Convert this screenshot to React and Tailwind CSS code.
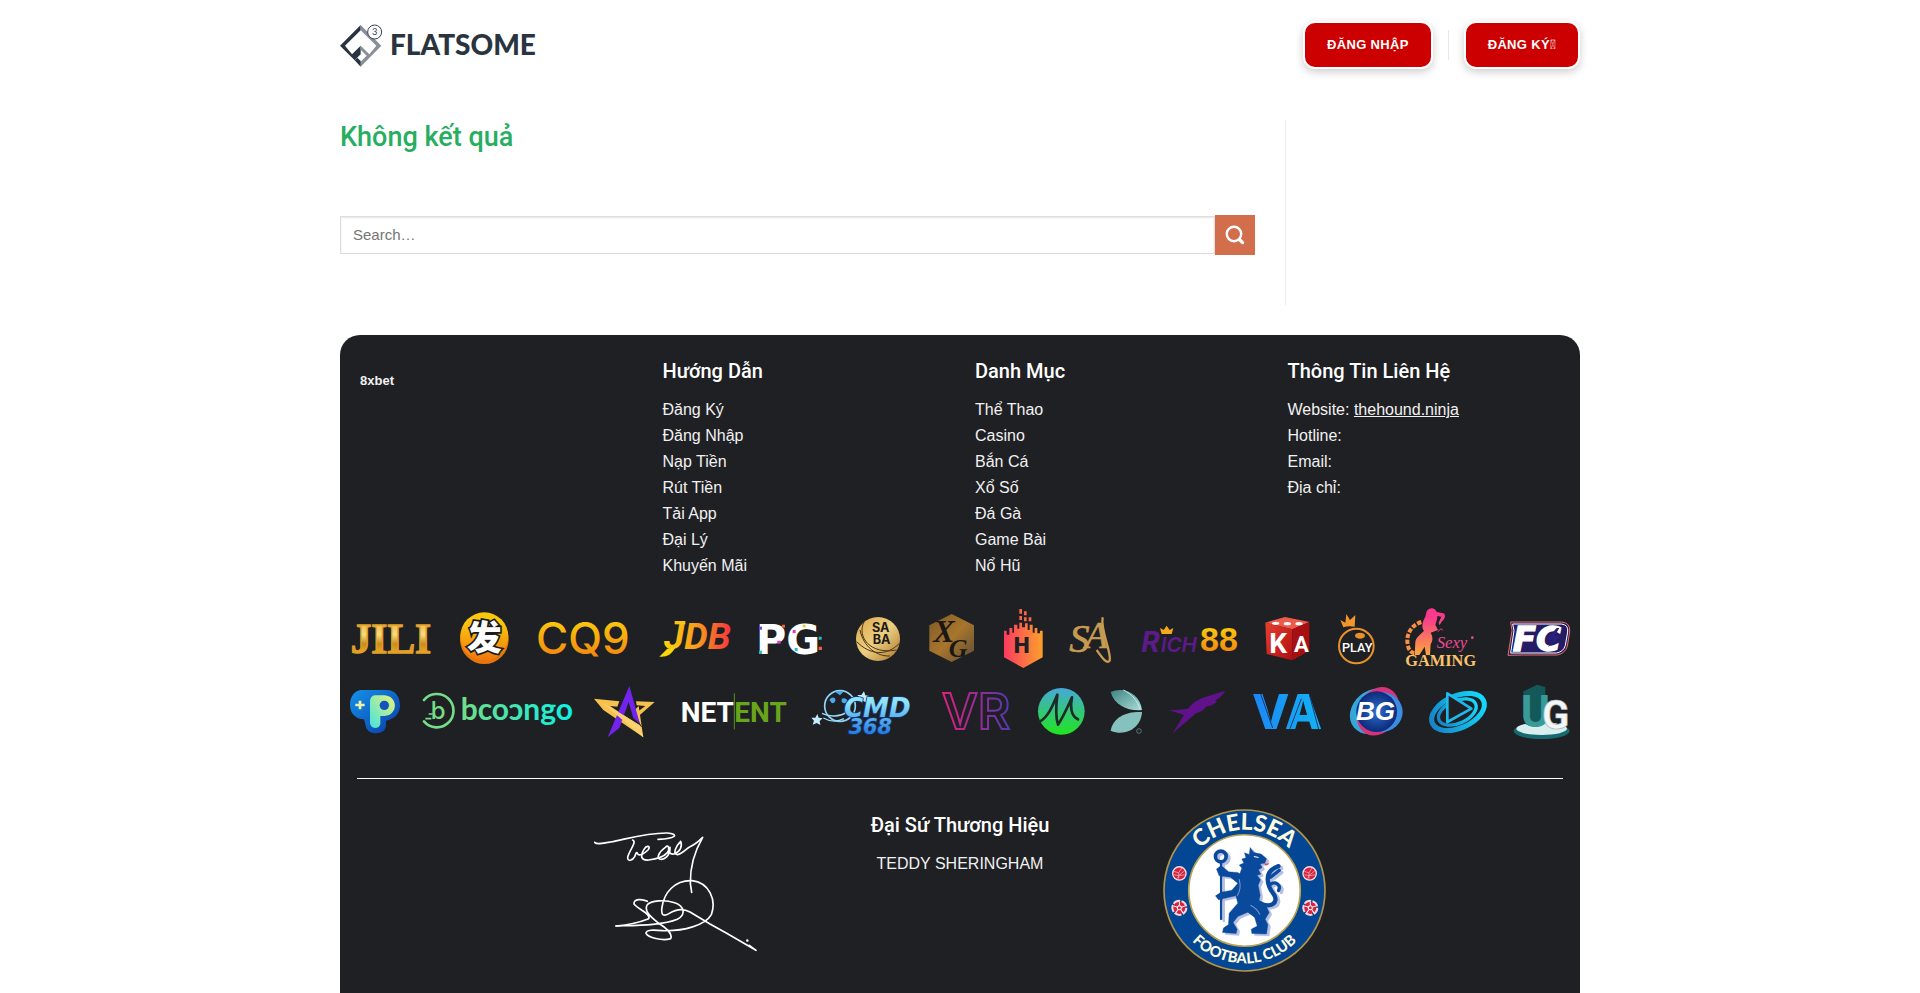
const guideLinks = ['Đăng Ký', 'Đăng Nhập', 'Nạp Tiền', 'Rút Tiền', 'Tải App', 'Đại Lý', 'Khuyến Mãi']
const categoryLinks = ['Thể Thao', 'Casino', 'Bắn Cá', 'Xổ Số', 'Đá Gà', 'Game Bài', 'Nổ Hũ']

const headerButton =
  'h-12 rounded-xl border-2 border-white bg-[#cc0000] px-[22px] text-[13px] font-bold uppercase tracking-wide text-white shadow-[0_3px_8px_rgba(0,0,0,0.2)]'

function Logo() {
  return (
    <svg viewBox="30 30 600 144" className="h-12 w-[200px]" role="img" aria-label="Flatsome">
      <path d="M92 42 L30 104 L74 148 L92 130 V104 L66 130 L45 104 L92 58 Z" fill="#2a3441" />
      <path d="M92 42 L154 104 L92 167 V152 L110 134 L92 116 V104 L118 130 L139 104 L92 58 Z" fill="#8b8f98" />
      <path d="M74 148 L92 167 V150 L82 140 Z" fill="#2a3441" />
      <circle cx="134" cy="63" r="21" fill="#fff" stroke="#374151" strokeWidth="3" />
      <text x="126" y="73" fontFamily="Lato" fontSize="28" fill="#374151">3</text>
      <text x="180" y="131" fontFamily="Lato" fontWeight="900" fontSize="84" fill="#2a3441">FLATSOME</text>
    </svg>
  )
}

function ProviderGradients() {
  return (
    <defs>
      <linearGradient id="gold" x1="0" y1="0" x2="0" y2="1">
        <stop offset="0" stopColor="#e8a520" />
        <stop offset="0.4" stopColor="#f6dc80" />
        <stop offset="0.6" stopColor="#c98a1e" />
        <stop offset="0.85" stopColor="#f5b022" />
      </linearGradient>
      <linearGradient id="amber" x1="0" y1="0" x2="0" y2="1">
        <stop offset="0.2" stopColor="#fbc70d" />
        <stop offset="1" stopColor="#f0780f" />
      </linearGradient>
      <linearGradient id="jdb" x1="0" y1="0" x2="1" y2="0">
        <stop offset="0" stopColor="#fbd50b" />
        <stop offset="0.5" stopColor="#f79a1c" />
        <stop offset="1" stopColor="#f8353d" />
      </linearGradient>
      <linearGradient id="bronze" x1="0" y1="0" x2="1" y2="1">
        <stop offset="0" stopColor="#d9a548" />
        <stop offset="0.5" stopColor="#edcf82" />
        <stop offset="1" stopColor="#a87427" />
      </linearGradient>
      <linearGradient id="brown" x1="0" y1="0" x2="1" y2="1">
        <stop offset="0" stopColor="#7c5a28" />
        <stop offset="0.5" stopColor="#a8762c" />
        <stop offset="1" stopColor="#5c4c38" />
      </linearGradient>
      <linearGradient id="hot" x1="0" y1="0" x2="1" y2="0">
        <stop offset="0" stopColor="#fb3a60" />
        <stop offset="1" stopColor="#fca02c" />
      </linearGradient>
      <linearGradient id="lady" x1="0" y1="0" x2="0" y2="1">
        <stop offset="0.2" stopColor="#f93a8c" />
        <stop offset="1" stopColor="#fba63c" />
      </linearGradient>
      <linearGradient id="mint" x1="0" y1="0" x2="1" y2="0">
        <stop offset="0" stopColor="#75dc88" />
        <stop offset="1" stopColor="#0df0e4" />
      </linearGradient>
      <linearGradient id="pad" x1="0" y1="0" x2="1" y2="1">
        <stop offset="0" stopColor="#1592e8" />
        <stop offset="1" stopColor="#0a3ba8" />
      </linearGradient>
      <linearGradient id="lime" x1="0" y1="1" x2="1" y2="0">
        <stop offset="0" stopColor="#43e3dc" />
        <stop offset="1" stopColor="#ecf27a" />
      </linearGradient>
      <linearGradient id="sky" x1="0" y1="0" x2="0" y2="1">
        <stop offset="0.2" stopColor="#8fe4fb" />
        <stop offset="1" stopColor="#1569df" />
      </linearGradient>
      <linearGradient id="neon" x1="0" y1="0" x2="1" y2="0">
        <stop offset="0" stopColor="#e01f7e" />
        <stop offset="1" stopColor="#5438b0" />
      </linearGradient>
      <linearGradient id="micro" x1="0" y1="0" x2="0" y2="1">
        <stop offset="0" stopColor="#47a8d8" />
        <stop offset="1" stopColor="#20e51e" />
      </linearGradient>
      <linearGradient id="leaf" x1="0" y1="0" x2="1" y2="1">
        <stop offset="0" stopColor="#3f8583" />
        <stop offset="1" stopColor="#a9dcd6" />
      </linearGradient>
      <linearGradient id="azure" x1="0" y1="0" x2="1" y2="0">
        <stop offset="0" stopColor="#1c86f5" />
        <stop offset="1" stopColor="#12b4f4" />
      </linearGradient>
      <linearGradient id="cyan" x1="0" y1="0" x2="1" y2="0">
        <stop offset="0" stopColor="#1686c8" />
        <stop offset="1" stopColor="#14d8fb" />
      </linearGradient>
      <linearGradient id="dice" x1="0" y1="0" x2="1" y2="1">
        <stop offset="0" stopColor="#e6402f" />
        <stop offset="1" stopColor="#b00d12" />
      </linearGradient>
      <radialGradient id="globe">
        <stop offset="0" stopColor="#2b6fd0" />
        <stop offset="1" stopColor="#0d2a78" />
      </radialGradient>
    </defs>
  )
}

function TopLogos() {
  return (
    <g>
      {/* JILI */}
      <text x="32" y="160" fontFamily="Liberation Serif" fontWeight="700" fontSize="124" fill="url(#gold)" stroke="#e0a02a" strokeWidth="4">JILI</text>

      {/* Fa Chai */}
      <circle cx="433" cy="119" r="73" fill="#e8760c" />
      <circle cx="433" cy="109" r="72" fill="url(#amber)" />
      <text x="381" y="151" fontFamily="Noto Sans CJK SC" fontWeight="900" fontSize="104" fill="#fff" stroke="#1b1b1b" strokeWidth="10" paintOrder="stroke">发</text>

      {/* CQ9 */}
      <text x="588" y="161" fontFamily="Inter" fontWeight="500" fontSize="132" fill="url(#amber)">CQ9</text>

      {/* JDB */}
      <text x="972" y="148" fontFamily="Roboto" fontWeight="700" fontStyle="italic" fontSize="112" fill="url(#jdb)">JDB</text>
      <path d="M1004 68 H1036" stroke="#fbc412" strokeWidth="10" />
      <path d="M958 170 C978 172 994 166 1006 142 L982 146 Z" fill="#fbd50b" />

      {/* PG */}
      <g transform="translate(1200 0)">
        <text x="48" y="162" fontFamily="DejaVu Sans" fontWeight="700" fontSize="124" fill="#fff">PG</text>
        <path d="M126 74h9v9h-9z M236 140h10v10h-10z" fill="#f0603c" />
        <path d="M112 122h10v9h-10z M158 90h9v9h-9z" fill="#d838c8" />
        <path d="M57 152h9v10h-9z M236 110h9v9h-9z M164 144h9v9h-9z" fill="#28b8c8" />
        <path d="M57 80h9v9h-9z" fill="#7840d8" />
        <path d="M188 74h9v8h-9z" fill="#e8c83c" />

        {/* SABA */}
        <circle cx="414" cy="117" r="66" fill="url(#bronze)" />
        <path d="M372 66 C350 110 390 165 470 150 M350 125 C390 165 440 170 478 130 M360 90 C370 140 410 170 450 168" fill="none" stroke="#4a3413" strokeWidth="3" />
        <text fontFamily="Inter" fontWeight="700" fontSize="38" fill="#1c1a17">
          <tspan x="396" y="96">SA</tspan>
          <tspan x="398" y="133">BA</tspan>
        </text>

        {/* XG */}
        <path d="M635 42 L702 76 V152 L635 186 L568 152 V76 Z" fill="url(#brown)" />
        <text fontFamily="Liberation Serif" fontWeight="700" fontStyle="italic" fill="#1b1712">
          <tspan x="580" y="126" fontSize="96">X</tspan>
          <tspan x="626" y="170" fontSize="78">G</tspan>
        </text>

        {/* Hacksaw */}
        <path d="M792 92 H800 V104 H808 V84 H817 V98 H822 V74 H832 V86 H838 V68 H846 V82 H855 V70 H863 V90 H869 V74 H878 V98 H884 V84 H892 V100 H900 V92 H908 V172 L850 204 L792 172 Z" fill="url(#hot)" />
        <path d="M838 27h8v14h-8z M852 34h8v12h-8z M838 48h8v12h-8z M852 52h8v12h-8z M866 52h8v12h-8z" fill="#fb6547" />
        <text x="819" y="158" fontFamily="DejaVu Sans" fontWeight="700" fontSize="62" fill="#1f2024">H</text>

        {/* SA */}
        <text fontFamily="Liberation Serif" fontStyle="italic" fill="#c79b52" stroke="#c79b52" strokeWidth="2">
          <tspan x="988" y="155" fontSize="122">S</tspan>
          <tspan x="1036" y="144" fontSize="112">A</tspan>
        </text>
        <path d="M1088 52 C1080 90 1116 160 1109 182 C1100 194 1084 170 1070 150" fill="none" stroke="#c79b52" strokeWidth="7" />
      </g>

      {/* Rich88 */}
      <g transform="translate(2460 0)">
        <text y="155" fontFamily="Inter" fontStyle="italic" fill="#5c1a8a">
          <tspan x="-56" fontWeight="700" fontSize="84">R</tspan>
          <tspan x="2" fontWeight="600" fontSize="62">ICH</tspan>
        </text>
        <path d="M5 102 L0 84 L11 90 L20 77 L29 90 L40 84 L35 102 Z" fill="#f5a81c" />
        <text x="120" y="154" fontFamily="Liberation Sans" fontWeight="700" fontSize="102" fill="url(#amber)">88</text>

        {/* KA */}
        <path d="M316 68 L375 51 L448 66 L397 88 Z" fill="#ee5a4c" />
        <path d="M316 68 L397 88 V181 L320 162 Z" fill="url(#dice)" />
        <path d="M397 88 L448 66 V152 L397 181 Z" fill="#a80f12" />
        <g fill="#fff">
          <ellipse cx="347" cy="70" rx="11" ry="5" />
          <ellipse cx="382" cy="71" rx="11" ry="5" />
          <ellipse cx="417" cy="71" rx="11" ry="5" />
        </g>
        <text fontFamily="Roboto" fontWeight="700" fill="#fff">
          <tspan x="328" y="158" fontSize="84">K</tspan>
          <tspan x="402" y="156" fontSize="66">A</tspan>
        </text>

        {/* Pragmatic Play */}
        <circle cx="589" cy="138" r="52" fill="none" stroke="#e8912a" strokeWidth="6" />
        <path d="M550 82 L541 60 L556 68 L559 42 L570 60 L586 45 L584 80 Q566 76 550 82 Z" fill="#f0962b" />
        <ellipse cx="600" cy="107" rx="15" ry="9" fill="#e8912a" />
        <path d="M545 126h88v33h-88z" fill="#1f2024" />
        <text x="546" y="157" fontFamily="Roboto" fontWeight="500" fontSize="38" fill="#fff">PLAY</text>

        {/* Sexy Gaming */}
        <path d="M800 34 C808 20 826 22 830 36 L850 40 C858 44 856 56 846 64 L838 76 L836 68 L844 50 L832 48 C832 60 828 66 826 74 L834 90 L812 98 C820 112 818 124 812 132 L810 165 H798 L794 140 L778 165 H764 L766 125 C770 108 786 100 792 92 C782 80 790 60 796 50 Z" fill="url(#lady)" />
        <path d="M784 66 C752 76 736 106 744 138 C746 150 756 160 766 160" fill="none" stroke="#f99043" strokeWidth="12" strokeDasharray="13 5" />
        <path d="M834 95 q10 -14 14 -4" fill="none" stroke="#e04592" strokeWidth="3" />
        <text fontFamily="Liberation Serif">
          <tspan x="830" y="143" fontStyle="italic" fontSize="50" fill="#ee4b93">Sexy</tspan>
          <tspan x="736" y="199" fontWeight="700" fontSize="49" fill="#f9c46c">GAMING</tspan>
        </text>
        <circle cx="937" cy="113" r="4" fill="#ee4b93" />

        {/* FC */}
        <path d="M1052 66 H1205 Q1232 68 1229 96 L1222 138 Q1216 160 1192 165 H1090 L1044 166 L1056 92 Z" fill="#241d66" stroke="#e8705a" strokeWidth="3" />
        <path d="M1058 72 H1204 Q1226 74 1223 96 L1216 136 Q1211 155 1190 159 H1052 L1062 92 Z" fill="none" stroke="#fff" strokeWidth="3" />
        <text x="1058" y="153" fontFamily="DejaVu Sans" fontWeight="700" fontStyle="italic" fontSize="102" fill="#fff" stroke="#fff" strokeWidth="4">FC</text>
        <path d="M1190 84 L1158 120 H1176 L1164 142 L1202 108 H1184 L1198 84 Z" fill="#2a1f7c" />
      </g>
    </g>
  )
}

function BottomLogos() {
  return (
    <g>
      {/* TP */}
      <path d="M62 270 H140 C166 270 180 290 180 316 C180 342 162 358 138 362 V378 Q136 400 106 400 Q78 398 76 372 L72 358 C44 356 30 338 30 314 C30 290 44 272 62 270 Z" fill="url(#pad)" />
      <path d="M56 302h8v9h10v8h-10v9h-8v-9h-10v-8h10z" fill="#e8f4a8" />
      <path d="M104 286 H134 C176 290 174 346 134 348 H121 V372 Q118 384 105 384 Q92 382 90 370 V302 Q92 288 104 286 Z" fill="url(#lime)" />
      <circle cx="133" cy="316" r="14" fill="#1553b8" />

      {/* Booongo */}
      <path d="M252 300 A50 50 0 1 1 252 364" fill="none" stroke="#75dc88" strokeWidth="8" strokeLinecap="round" />
      <text x="272" y="358" fontFamily="Inter" fontWeight="500" fontSize="72" fill="#75dc88">b</text>
      <path d="M266 342h12 M256 356h18" stroke="#75dc88" strokeWidth="5" />
      <text x="362" y="360" fontFamily="Lato" fontWeight="700" fontSize="90" fill="url(#mint)">bcoɔngo</text>

      {/* Star */}
      <path d="M762 296 L838 304 L832 320 L810 318 L906 382 L880 334 L896 318 L910 412 L790 330 Z" fill="#f6c14c" />
      <path d="M868 258 L803 412 L838 384 L866 306 L880 354 L900 372 Z" fill="#7423ee" />
      <path d="M888 304 L944 306 L896 348 L892 336 L916 318 L890 316 Z" fill="#f6c14c" />
      <path d="M786 308 L910 412 L900 376 L812 322 Z" fill="#fad070" />

      {/* NetEnt */}
      <path d="M1183 280v108" stroke="#5d8f1c" strokeWidth="3" />
      <text y="366" fontFamily="Roboto" fontWeight="700" fontSize="84">
        <tspan x="1022" fill="#fff">NET</tspan>
        <tspan x="1183" fill="#69a51c">ENT</tspan>
      </text>

      <g transform="translate(1200 0)">
        {/* CMD368 */}
        <circle cx="300" cy="318" r="46" fill="none" stroke="#8fd4f6" strokeWidth="5" />
        <path d="M268 300 q8 -12 18 -4 q2 12 -10 14 z M305 296 q14 -4 18 8 q-8 10 -18 2 z M286 276 q14 -6 24 0 l-10 10 z" fill="#4aa8ee" />
        <path d="M246 340 C270 352 300 350 318 338 M250 354 C275 368 296 364 312 356" fill="none" stroke="#9adcf8" strokeWidth="4" />
        <path d="M372 274 l4 12 12 2 -10 8 2 12 -12 -6 -12 4 4 -12 -8 -9 12 0 z" fill="#c4ecfc" />
        <path d="M232 342 l4 11 12 2 -9 8 2 12 -11 -6 -12 5 4 -12 -8 -9 12 0 z" fill="#c4ecfc" />
        <text fontFamily="DejaVu Sans" fontWeight="700" fontStyle="italic" fill="url(#sky)" stroke="#12386e" strokeWidth="5" paintOrder="stroke">
          <tspan x="312" y="352" fontSize="78">CMD</tspan>
          <tspan x="326" y="402" fontSize="62">368</tspan>
        </text>

        {/* VR */}
        <text x="606" y="386" fontFamily="Inter" fontWeight="600" fontSize="148" fill="none" stroke="url(#neon)" strokeWidth="6">VR</text>

        {/* Microgaming */}
        <circle cx="964" cy="334" r="70" fill="url(#micro)" />
        <path d="M900 364 C926 350 940 312 952 284 C948 316 946 350 954 374 C970 350 984 318 996 292 C990 318 992 348 1014 358" fill="none" stroke="#1d2a25" strokeWidth="8" strokeLinecap="round" strokeLinejoin="round" />

        {/* Evolution */}
        <path d="M1112 276 C1150 258 1200 280 1206 330 C1166 334 1124 318 1112 276 Z" fill="url(#leaf)" />
        <path d="M1112 392 C1120 350 1160 334 1206 336 C1204 380 1160 412 1112 392 Z" fill="#85c2bd" />
        <path d="M1150 270 C1176 282 1194 304 1200 328" fill="none" stroke="#c5ebe6" strokeWidth="3" />
        <circle cx="1197" cy="393" r="7" fill="none" stroke="#6fa09d" strokeWidth="2" />
      </g>

      <g transform="translate(2460 0)">
        {/* Swift bird */}
        <path d="M28 331 C50 330 68 328 84 326 C104 296 144 288 196 272 C188 286 176 296 164 302 L172 304 C160 316 148 318 138 320 C132 330 122 336 108 340 C94 352 80 364 66 376 L38 400 C50 380 62 362 72 346 C60 340 44 336 28 331 Z" fill="#61128a" />

        {/* VA */}
        <text y="388" fontFamily="Inter" fontWeight="800" fontSize="146" fill="url(#azure)">
          <tspan x="276">V</tspan>
          <tspan x="374">A</tspan>
        </text>
        <path d="M302 282 L338 384 M448 284 L476 388 M390 386 L424 296" fill="none" stroke="#1b3a70" strokeWidth="3" />

        {/* BG */}
        <ellipse cx="640" cy="334" rx="76" ry="62" fill="#36a6d8" transform="rotate(-40 640 334)" />
        <ellipse cx="654" cy="334" rx="76" ry="60" fill="#d6337c" transform="rotate(-62 654 334)" />
        <ellipse cx="662" cy="336" rx="66" ry="60" fill="#3a8de0" />
        <circle cx="650" cy="335" r="61" fill="url(#globe)" />
        <text x="588" y="360" fontFamily="Liberation Sans" fontWeight="700" fontStyle="italic" fontSize="78" fill="#fff">BG</text>

        {/* Playtech */}
        <g fill="none" stroke="url(#cyan)">
          <ellipse cx="894" cy="336" rx="84" ry="48" strokeWidth="15" transform="rotate(-24 894 336)" />
          <ellipse cx="892" cy="336" rx="60" ry="34" strokeWidth="10" transform="rotate(-24 892 336)" />
        </g>
        <path d="M862 280 L934 326 L862 366 Z" fill="#1f2024" stroke="#1fb8ea" strokeWidth="8" strokeLinejoin="round" />

        {/* UG */}
        <ellipse cx="1145" cy="393" rx="84" ry="24" fill="#16696c" />
        <ellipse cx="1145" cy="386" rx="76" ry="19" fill="#d9eeee" />
        <path d="M1090 274 L1132 254 L1156 262 V360 Q1130 392 1096 372 Z" fill="#14595a" />
        <text fontFamily="Roboto" fontWeight="700">
          <tspan x="1082" y="382" fontSize="134" fill="#3a9a98">U</tspan>
          <tspan x="1146" y="387" fontSize="120" fill="#f3f6f7" stroke="#a9b6ba" strokeWidth="2">G</tspan>
        </text>
      </g>
    </g>
  )
}

function Providers() {
  return (
    <svg viewBox="0 0 3720 450" className="mt-[21px] block w-full" role="img" aria-label="Nhà cung cấp game">
      <ProviderGradients />
      <TopLogos />
      <BottomLogos />
    </svg>
  )
}

function Signature() {
  return (
    <svg viewBox="42 27 489 489" className="w-[163px]" role="img" aria-label="Teddy Sheringham">
      <g fill="none" stroke="#fff" strokeWidth="5" strokeLinecap="round" strokeLinejoin="round">
        <path d="M44 127 C50 134 70 130 92 126 C140 117 200 98 262 99 C296 102 292 116 234 118" />
        <path d="M158 120 C172 126 148 150 143 172 C142 186 158 182 164 170 C168 160 170 154 172 160 C176 172 196 158 204 150 C214 138 200 134 192 148 C178 172 186 182 206 180 C224 178 250 172 262 158 C270 146 266 132 256 142 C236 156 226 178 244 178 C262 176 272 158 270 142 C266 158 270 164 282 162 C300 156 308 140 302 124 C286 140 278 162 292 164 C310 160 320 144 330 140 C344 134 356 124 368 112 C346 150 330 196 331 250 L335 277" />
        <path d="M108 378 C150 374 176 368 206 356 C214 340 176 330 162 312 C160 296 186 296 202 304" />
        <path d="M108 378 C170 376 250 376 292 358 C318 344 314 318 284 308 C252 298 214 302 202 314 C190 334 214 352 236 370 C262 386 278 404 272 416 C246 424 204 412 198 400 C198 388 222 390 250 392 C310 394 376 376 394 344 C410 300 388 248 336 242 C284 240 252 278 246 322 C242 348 252 350 268 340 C290 326 312 326 330 336 L390 372 L440 400 L528 451 L508 436" />
        <path d="M502 421 v1" strokeWidth="7" />
      </g>
    </svg>
  )
}

function Rose({ x, y }) {
  return (
    <g transform={`translate(${x} ${y})`}>
      <circle r="20" fill="none" stroke="#f3d9dd" strokeWidth="8" strokeDasharray="21 4" />
      <circle r="18" fill="#d8233f" />
      <path d="M0 -18 V-6 M17 -6 L6 -2 M11 15 L4 5 M-11 15 L-4 5 M-17 -6 L-6 -2" stroke="#fff" strokeWidth="3" />
      <circle r="6" fill="#d8233f" stroke="#fff" strokeWidth="3" />
    </g>
  )
}

function Ball({ x, y }) {
  return (
    <g transform={`translate(${x} ${y})`}>
      <circle r="20" fill="#d8233f" stroke="#f6dde0" strokeWidth="4" />
      <path d="M-16 -6 L-2 -2 L8 -18 M-16 4 L-2 6 L16 -8 M-8 16 L0 6 L17 4 M-2 -2 V16" fill="none" stroke="#f3c3ca" strokeWidth="2" />
    </g>
  )
}

function Lion() {
  return (
    <g>
      <path d="M284 173 L298 178 L301 157 L312 172 L334 177 L350 191 L345 204 L331 207 L337 217 L326 224 L333 237 L322 240 L332 254 L325 270 L331 300 L327 318 L350 335 L358 352 L346 372 L354 388 L350 416 L306 415 L304 402 L322 392 L314 366 L294 351 L264 364 L250 382 L262 402 L259 415 L218 412 L221 398 L236 388 L238 354 L264 324 L258 302 L206 314 L197 302 L214 291 L246 285 L264 264 L242 246 L208 242 L200 222 L214 211 L236 230 L264 232 L270 236 L276 219 L268 210 L282 204 L276 192 L288 188 Z" />
      <path d="M328 322 C362 342 388 322 372 298 C350 270 340 228 386 213" fill="none" strokeWidth="13" strokeLinecap="round" />
      <path d="M361 268 C378 256 394 270 386 286 M362 246 L388 226" fill="none" strokeWidth="10" strokeLinecap="round" />
      <circle cx="213" cy="184" r="16" fill="none" strokeWidth="11" />
      <path d="M214 200 V374" fill="none" strokeWidth="7" />
    </g>
  )
}

function ChelseaBadge() {
  return (
    <svg viewBox="40 42 488 488" className="w-[163px]" role="img" aria-label="Chelsea Football Club">
      <defs>
        <path id="arc-top" d="M102 286 A182 182 0 0 1 466 286" />
        <path id="arc-bottom" d="M66 286 A218 218 0 0 0 502 286" />
      </defs>
      <circle cx="284" cy="286" r="241" fill="#034694" stroke="#b3954a" strokeWidth="5" />
      <circle cx="284" cy="286" r="167" fill="#fff" stroke="#b9a24f" strokeWidth="5" />
      <g fontFamily="Lato" fontWeight="900" fill="#fdfbdc" textAnchor="middle">
        <text fontSize="68">
          <textPath href="#arc-top" startOffset="50%">CHELSEA</textPath>
        </text>
        <text fontSize="44">
          <textPath href="#arc-bottom" startOffset="50%">FOOTBALL CLUB</textPath>
        </text>
      </g>
      <Ball x={89} y={235} />
      <Ball x={479} y={235} />
      <Rose x={89} y={338} />
      <Rose x={481} y={338} />
      <g transform="translate(8 6)" fill="#b4bfe3" stroke="#b4bfe3"><Lion /></g>
      <g fill="#0a4a9c" stroke="#0a4a9c"><Lion /></g>
      <path d="M342 203 q8 6 18 0 q-4 8 -14 7 z" fill="#e0384c" />
      <path d="M312 184 l14 3" stroke="#fff" strokeWidth="3" />
      <path d="M268 252 q8 30 -6 50 M302 330 q20 10 28 28" fill="none" stroke="#7f98cf" strokeWidth="3" />
    </svg>
  )
}

function FooterTitle({ children }) {
  return <h2 className="mb-[10px] font-['Roboto',sans-serif] text-xl leading-8 font-medium text-white">{children}</h2>
}

function FooterLinks({ title, links }) {
  return (
    <nav className="px-[15px]" aria-label={title}>
      <FooterTitle>{title}</FooterTitle>
      <ul>
        {links.map((link) => (
          <li key={link}><a href="#">{link}</a></li>
        ))}
      </ul>
    </nav>
  )
}

export default function App() {
  return (
    <div className="flex min-h-screen flex-col bg-white font-['Liberation_Sans',Arial,sans-serif] text-base leading-[26px]">
      <header className="mx-auto flex h-[90px] w-full max-w-[1240px] items-center justify-between">
        <a href="#"><Logo /></a>
        <div className="flex items-center gap-[15px]">
          <button type="button" className={headerButton}>Đăng nhập</button>
          <span className="h-[30px] w-px bg-gray-200" />
          <button type="button" className={headerButton}>
            Đăng ký<span className="font-['Roboto'] font-normal">{'\uf234'}</span>
          </button>
        </div>
      </header>

      <main className="mx-auto flex w-full max-w-[1240px] py-[30px]">
        <section className="flex-1 border-r border-[#ececec] pr-[30px] pb-[50px]">
          <h1 className="font-['Roboto',sans-serif] text-[27px] leading-[34px] font-medium text-[#27ae60]">Không kết quả</h1>
          <form className="mt-[61px] flex items-center" role="search" onSubmit={(e) => e.preventDefault()}>
            <input
              type="search"
              aria-label="Search"
              placeholder="Search…"
              className="h-[38px] min-w-0 flex-1 border border-[#ddd] px-3 pb-0.5 text-[15px] text-[#333] shadow-[inset_0_1px_2px_rgba(0,0,0,0.1)] outline-none placeholder:text-[#757575]"
            />
            <button type="submit" aria-label="Submit" className="flex size-10 items-center justify-center bg-[#d26e4b] text-white">
              <svg viewBox="0 0 20 20" className="size-5" fill="none" stroke="currentColor" strokeLinecap="round">
                <circle cx="9" cy="9" r="7.2" strokeWidth="2.4" />
                <path d="M14.5 14.5 L17.6 17.6" strokeWidth="3.2" />
              </svg>
            </button>
          </form>
        </section>
        <aside className="hidden w-[294px] lg:block" />
      </main>

      <footer className="mx-auto w-full max-w-[1240px] flex-1 rounded-t-[20px] bg-[#1f2024] pt-5 pb-5 text-[#f1f1f1]">
        <div className="-mx-[5px] grid grid-cols-4">
          <div className="px-[25px] pt-[15px] text-[13px] leading-[22px] font-bold">8xbet</div>
          <FooterLinks title="Hướng Dẫn" links={guideLinks} />
          <FooterLinks title="Danh Mục" links={categoryLinks} />
          <div className="px-[15px]">
            <FooterTitle>Thông Tin Liên Hệ</FooterTitle>
            <p>Website: <a href="#" className="underline">thehound.ninja</a></p>
            <p>Hotline:</p>
            <p>Email:</p>
            <p>Địa chỉ:</p>
          </div>
        </div>

        <Providers />

        <hr className="mx-[17px] mt-7 mb-[30px] border-white" />

        <div className="mx-auto grid max-w-[854px] grid-cols-3 justify-items-center text-center">
          <Signature />
          <div>
            <FooterTitle>Đại Sứ Thương Hiệu</FooterTitle>
            <p>TEDDY SHERINGHAM</p>
          </div>
          <ChelseaBadge />
        </div>
      </footer>
    </div>
  )
}
